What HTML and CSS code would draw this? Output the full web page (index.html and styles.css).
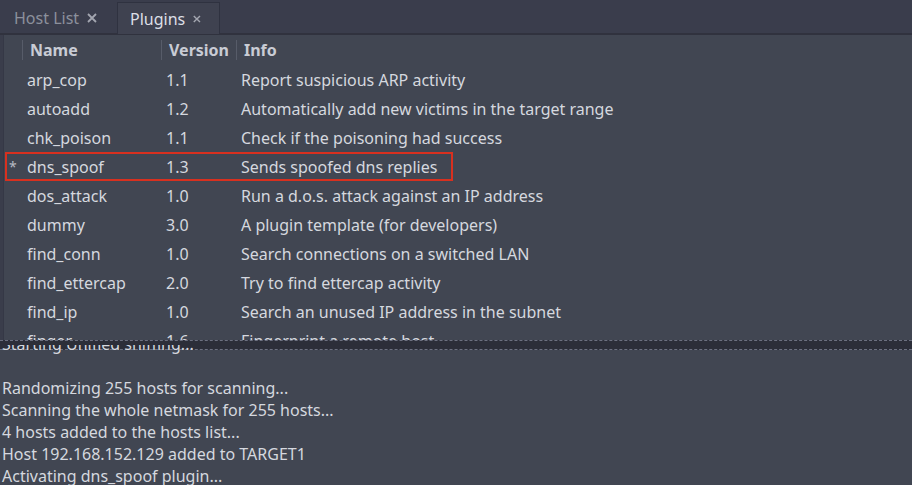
FILE: index.html
```html
<!DOCTYPE html>
<html>
<head>
<meta charset="utf-8">
<link rel="stylesheet" href="styles.css">
</head>
<body>
<div class="app">
  <div class="tabbar">
    <div class="tab">
      <span class="tab-label">Host List</span>
      <svg class="close" width="10" height="10" viewBox="0 0 10 10"><path d="M1 1L9 9M9 1L1 9" stroke="currentColor" stroke-width="1.8" fill="none"/></svg>
    </div>
    <div class="tab active">
      <span class="tab-label">Plugins</span>
      <svg class="close" width="10" height="10" viewBox="0 0 10 10"><path d="M1 1L9 9M9 1L1 9" stroke="currentColor" stroke-width="1.8" fill="none"/></svg>
    </div>
  </div>
  <div class="table-wrap">
    <div class="table">
      <div class="row header">
        <div class="cell mark"></div>
        <div class="cell hcell">Name</div>
        <div class="cell hcell">Version</div>
        <div class="cell hcell">Info</div>
      </div>
      <div class="row"><div class="cell mark"></div><div class="cell">arp_cop</div><div class="cell">1.1</div><div class="cell">Report suspicious ARP activity</div></div>
      <div class="row"><div class="cell mark"></div><div class="cell">autoadd</div><div class="cell">1.2</div><div class="cell">Automatically add new victims in the target range</div></div>
      <div class="row"><div class="cell mark"></div><div class="cell">chk_poison</div><div class="cell">1.1</div><div class="cell">Check if the poisoning had success</div></div>
      <div class="row selected"><div class="cell mark">*</div><div class="cell">dns_spoof</div><div class="cell">1.3</div><div class="cell">Sends spoofed dns replies</div><div class="highlight"></div></div>
      <div class="row"><div class="cell mark"></div><div class="cell">dos_attack</div><div class="cell">1.0</div><div class="cell">Run a d.o.s. attack against an IP address</div></div>
      <div class="row"><div class="cell mark"></div><div class="cell">dummy</div><div class="cell">3.0</div><div class="cell">A plugin template (for developers)</div></div>
      <div class="row"><div class="cell mark"></div><div class="cell">find_conn</div><div class="cell">1.0</div><div class="cell">Search connections on a switched LAN</div></div>
      <div class="row"><div class="cell mark"></div><div class="cell">find_ettercap</div><div class="cell">2.0</div><div class="cell">Try to find ettercap activity</div></div>
      <div class="row"><div class="cell mark"></div><div class="cell">find_ip</div><div class="cell">1.0</div><div class="cell">Search an unused IP address in the subnet</div></div>
      <div class="row"><div class="cell mark"></div><div class="cell">finger</div><div class="cell">1.6</div><div class="cell">Fingerprint a remote host</div></div>
    </div>
  </div>
  <div class="divider"></div>
  <div class="log">
    <div class="log-content">
      <div class="line">Starting Unified sniffing...</div>
      <div class="line">&nbsp;</div>
      <div class="line">Randomizing 255 hosts for scanning...</div>
      <div class="line">Scanning the whole netmask for 255 hosts...</div>
      <div class="line">4 hosts added to the hosts list...</div>
      <div class="line">Host 192.168.152.129 added to TARGET1</div>
      <div class="line">Activating dns_spoof plugin...</div>
    </div>
  </div>
</div>
</body>
</html>
```

FILE: styles.css
```css
html, body {
  margin: 0;
  padding: 0;
  width: 912px;
  height: 485px;
  overflow: hidden;
  background: #414652;
  font-family: "Noto Sans", "DejaVu Sans", sans-serif;
  font-size: 16px;
  color: #d5d8df;
}
.app {
  display: flex;
  flex-direction: column;
  height: 485px;
}
.tabbar {
  height: 33px;
  flex: none;
  background: #3a3d4c;
  display: flex;
  align-items: flex-end;
  padding-left: 5px;
  border-bottom: 2px solid #30323e;
}
.tab {
  height: 31px;
  display: flex;
  align-items: center;
  padding: 0 18px 0 9px;
  gap: 8px;
  color: #8c909c;
  font-size: 16px;
  box-sizing: border-box;
  width: 112px;
}
.tab .close { color: #a3a6b0; margin-top: 1px; }
.tab.active {
  background: #3f4250;
  color: #dcdfe6;
  border: 1px solid #2f3240;
  border-bottom: none;
  padding-left: 12px;
  width: 103px;
  margin-bottom: -1px;
  height: 32px;
}
.table-wrap {
  height: 305px;
  flex: none;
  background: #3a3d4b;
  padding-left: 3px;
  overflow: hidden;
}
.table {
  height: 305px;
  background: #414652;
  border-left: 1px solid #353846;
  overflow: hidden;
}
.row {
  display: grid;
  grid-template-columns: 18px 139px 75px 1fr;
  height: 29px;
  align-items: center;
  position: relative;
}
.row.header {
  height: 30px;
}
.cell {
  padding-left: 5px;
  white-space: nowrap;
}
.cell.mark {
  padding-left: 5px;
  color: #b8bbc5;
  font-size: 14px;
}
.hcell {
  font-weight: bold;
  color: #c9ccd5;
  border-left: 1px solid #575c69;
  padding-left: 7px;
  height: 20px;
  line-height: 20px;
}
.highlight {
  position: absolute;
  left: 1px;
  top: 0;
  width: 448px;
  height: 29px;
  border: 2px solid #d8301f;
  box-sizing: border-box;
  pointer-events: none;
}
.divider {
  flex: none;
  height: 10px;
  box-sizing: border-box;
  background: #2c2e39;
  border-top: 1px dashed #6c7080;
  border-bottom: 1px dashed #6c7080;
}
.log {
  flex: 1;
  overflow: hidden;
  margin-top: -5px;
  position: relative;
  background: linear-gradient(to bottom, transparent 5px, #414652 5px);
}
.log-content {
  margin-top: -12px;
  padding-left: 2px;
}
.line {
  height: 22px;
  line-height: 22px;
  white-space: nowrap;
}
```
